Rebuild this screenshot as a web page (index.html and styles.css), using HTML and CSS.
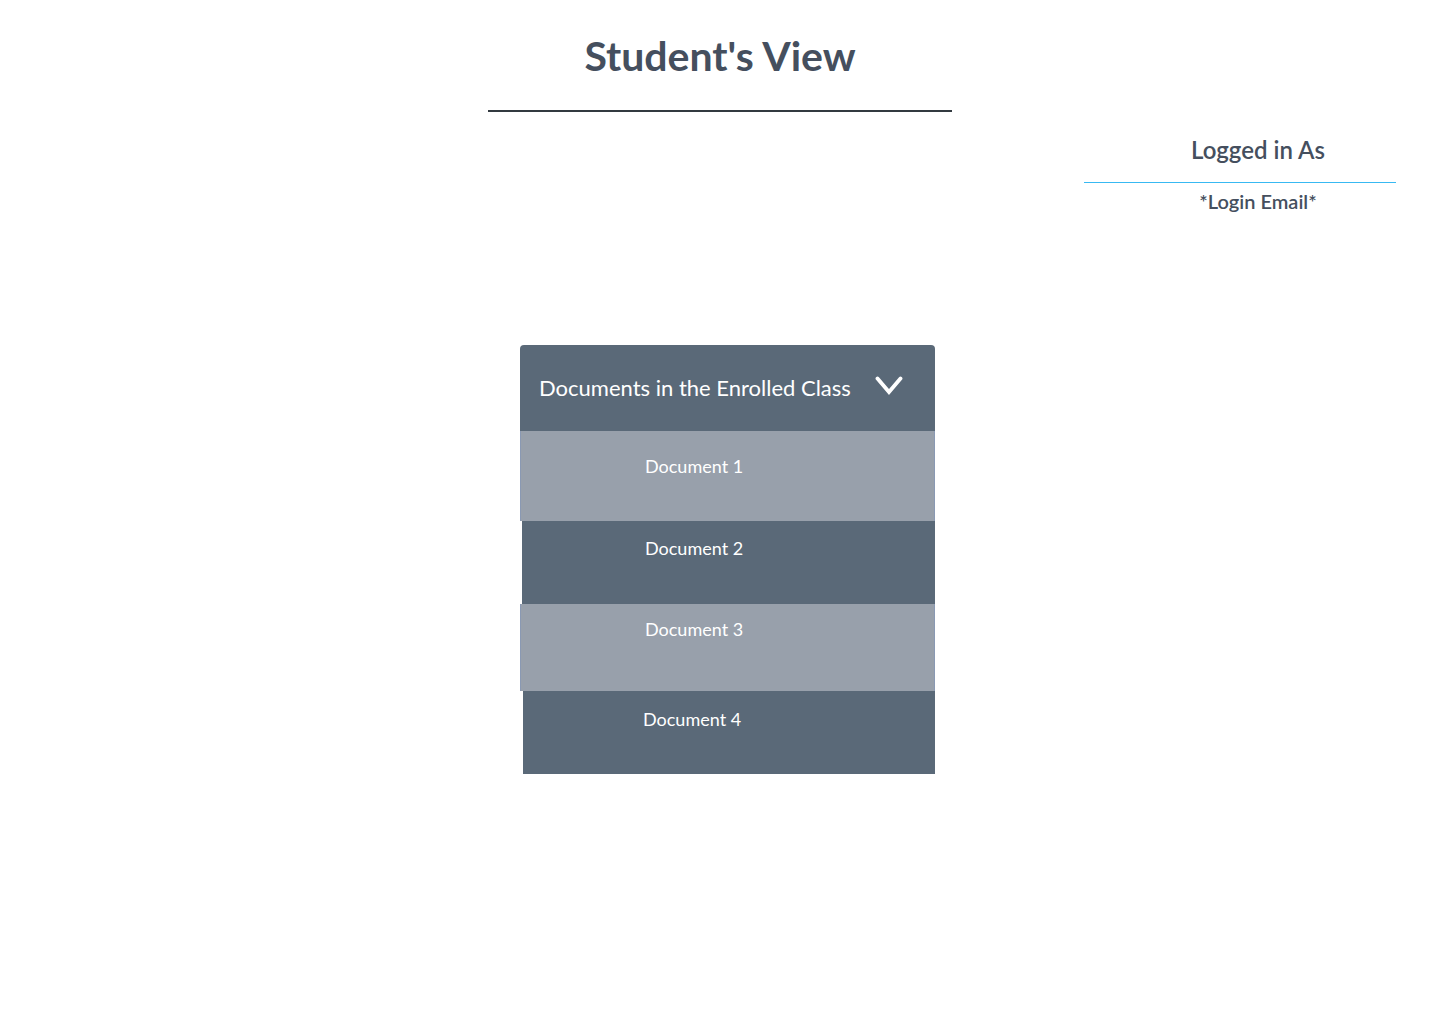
FILE: index.html
```html
<!DOCTYPE html>
<html lang="en">
<head>
<meta charset="utf-8">
<title>Student's View</title>
<link rel="stylesheet" href="styles.css">
</head>
<body>
<header class="page-head">
  <h1 class="page-title">Student's View</h1>
  <div class="title-rule"></div>
</header>
<aside class="account">
  <h2 class="account-title">Logged in As</h2>
  <div class="account-rule"></div>
  <p class="account-email">*Login Email*</p>
</aside>
<main class="content">
  <section class="panel">
    <div class="panel-head">
      <span class="panel-title">Documents in the Enrolled Class</span>
      <svg class="chevron" width="28" height="20" viewBox="0 0 28 20" aria-hidden="true">
        <polyline points="2.5,2.5 14,16 25.5,2.5" fill="none" stroke="#ffffff" stroke-width="3.8" stroke-linecap="round" stroke-linejoin="miter"/>
      </svg>
    </div>
    <ul class="doc-list">
      <li class="doc doc-light doc-1">Document 1</li>
      <li class="doc doc-dark doc-2">Document 2</li>
      <li class="doc doc-light doc-3">Document 3</li>
      <li class="doc doc-dark doc-4">Document 4</li>
    </ul>
  </section>
</main>
</body>
</html>
```
FILE: styles.css
```css
html, body {
  margin: 0;
  padding: 0;
  background: #ffffff;
}
body {
  font-family: Lato, "Open Sans", "Liberation Sans", sans-serif;
  color: #454f5e;
}
.page-head {
  display: flex;
  flex-direction: column;
  align-items: center;
  padding-top: 28px;
}
.page-title {
  margin: 0;
  font-size: 41px;
  font-weight: 700;
  line-height: 56px;
  color: #454f5e;
}
.title-rule {
  width: 464px;
  height: 2px;
  background: #333a40;
  margin-top: 26px;
}
.account {
  width: 312px;
  margin: 20px 44px 0 auto;
  display: flex;
  flex-direction: column;
  align-items: center;
}
.account-title {
  margin: 0;
  padding-left: 36px;
  font-size: 24px;
  font-weight: 600;
  line-height: 36px;
  color: #454f5e;
}
.account-rule {
  align-self: stretch;
  height: 1px;
  background: #38b9f2;
  margin-top: 14px;
}
.account-email {
  margin: 4px 0 0;
  padding-left: 36px;
  font-size: 20px;
  font-weight: 600;
  line-height: 28px;
  color: #454f5e;
}
.content {
  padding-left: 520px;
  padding-top: 130px;
}
.panel {
  width: 415px;
}
.panel-head {
  height: 86px;
  background: #5a6978;
  border-radius: 4px 4px 0 0;
  display: flex;
  align-items: center;
  padding: 0 32px 0 19px;
  box-sizing: border-box;
  justify-content: space-between;
}
.panel-title {
  color: #ffffff;
  font-size: 22px;
  font-weight: 400;
  margin-top: -1px;
}
.chevron {
  display: block;
  margin-top: -5px;
}
.doc-list {
  list-style: none;
  margin: 0;
  padding: 0;
}
.doc {
  color: #ffffff;
  font-size: 18px;
  font-weight: 400;
  line-height: 24px;
  box-sizing: border-box;
}
.doc-light {
  background: #98a0ab;
  border-left: 1px solid #8a99b3;
  border-right: 1px solid #8a99b3;
  padding-left: 124px;
}
.doc-dark {
  background: #5a6978;
}
.doc-1 {
  height: 90px;
  padding-top: 23px;
}
.doc-2 {
  height: 83px;
  padding-top: 15px;
  margin-left: 2px;
  padding-left: 123px;
}
.doc-3 {
  height: 87px;
  padding-top: 13px;
}
.doc-4 {
  height: 83px;
  padding-top: 16px;
  margin-left: 3px;
  padding-left: 120px;
}
```
